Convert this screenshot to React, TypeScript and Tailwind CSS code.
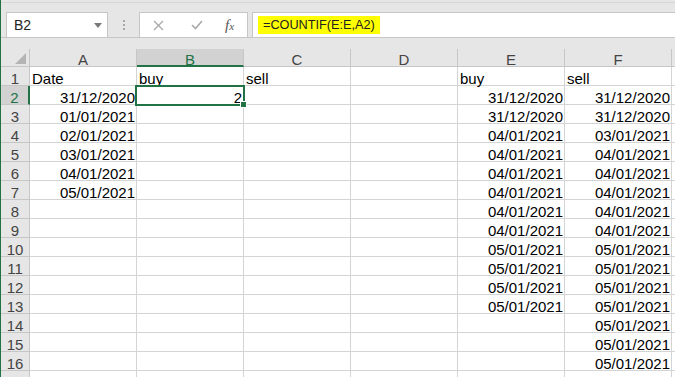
const cols = ["A", "B", "C", "D", "E", "F"];

type Cell = { v: string; right?: boolean };

const rows: Cell[][] = [
  [{ v: "Date" }, { v: "buy" }, { v: "sell" }, { v: "" }, { v: "buy" }, { v: "sell" }],
  [{ v: "31/12/2020", right: true }, { v: "2", right: true }, { v: "" }, { v: "" }, { v: "31/12/2020", right: true }, { v: "31/12/2020", right: true }],
  [{ v: "01/01/2021", right: true }, { v: "" }, { v: "" }, { v: "" }, { v: "31/12/2020", right: true }, { v: "31/12/2020", right: true }],
  [{ v: "02/01/2021", right: true }, { v: "" }, { v: "" }, { v: "" }, { v: "04/01/2021", right: true }, { v: "03/01/2021", right: true }],
  [{ v: "03/01/2021", right: true }, { v: "" }, { v: "" }, { v: "" }, { v: "04/01/2021", right: true }, { v: "04/01/2021", right: true }],
  [{ v: "04/01/2021", right: true }, { v: "" }, { v: "" }, { v: "" }, { v: "04/01/2021", right: true }, { v: "04/01/2021", right: true }],
  [{ v: "05/01/2021", right: true }, { v: "" }, { v: "" }, { v: "" }, { v: "04/01/2021", right: true }, { v: "04/01/2021", right: true }],
  [{ v: "" }, { v: "" }, { v: "" }, { v: "" }, { v: "04/01/2021", right: true }, { v: "04/01/2021", right: true }],
  [{ v: "" }, { v: "" }, { v: "" }, { v: "" }, { v: "04/01/2021", right: true }, { v: "04/01/2021", right: true }],
  [{ v: "" }, { v: "" }, { v: "" }, { v: "" }, { v: "05/01/2021", right: true }, { v: "05/01/2021", right: true }],
  [{ v: "" }, { v: "" }, { v: "" }, { v: "" }, { v: "05/01/2021", right: true }, { v: "05/01/2021", right: true }],
  [{ v: "" }, { v: "" }, { v: "" }, { v: "" }, { v: "05/01/2021", right: true }, { v: "05/01/2021", right: true }],
  [{ v: "" }, { v: "" }, { v: "" }, { v: "" }, { v: "05/01/2021", right: true }, { v: "05/01/2021", right: true }],
  [{ v: "" }, { v: "" }, { v: "" }, { v: "" }, { v: "" }, { v: "05/01/2021", right: true }],
  [{ v: "" }, { v: "" }, { v: "" }, { v: "" }, { v: "" }, { v: "05/01/2021", right: true }],
  [{ v: "" }, { v: "" }, { v: "" }, { v: "" }, { v: "" }, { v: "05/01/2021", right: true }],
  [{ v: "" }, { v: "" }, { v: "" }, { v: "" }, { v: "" }, { v: "" }],
];

const FormulaBar = () => (
  <div className="h-[49px] shrink-0 bg-[#e6e6e6] flex flex-col">
    <div className="h-[3px] border-b border-[#d6d6d6]" />
    <div className="mt-[9px] flex h-[26px] items-stretch border-b border-[#c6c6c6]">
      <div className="ml-[5px] flex w-[102px] items-center justify-between border border-b-0 border-[#c6c6c6] bg-white pl-[7px] pr-[5px]">
        <span className="text-[14px] text-[#222]">B2</span>
        <svg width="8" height="5" viewBox="0 0 8 5">
          <path d="M0 0h8L4 5z" fill="#7a7a7a" />
        </svg>
      </div>
      <div className="flex w-[31px] flex-col items-center justify-center gap-[2px]">
        <div className="h-[2px] w-[2px] bg-[#a8a8a8]" />
        <div className="h-[2px] w-[2px] bg-[#a8a8a8]" />
        <div className="h-[2px] w-[2px] bg-[#a8a8a8]" />
      </div>
      <div className="flex w-[109px] items-center border border-b-0 border-[#c6c6c6] bg-white">
        <svg className="ml-[13px]" width="11" height="11" viewBox="0 0 11 11">
          <path d="M1 1l9 9M10 1l-9 9" stroke="#a9a9a9" strokeWidth="1.3" />
        </svg>
        <svg className="ml-[27px]" width="12" height="10" viewBox="0 0 12 10">
          <path d="M1 5l3.5 3.5L11 1" stroke="#a9a9a9" strokeWidth="1.6" fill="none" />
        </svg>
        <span className="ml-[22px] font-['Liberation_Serif',serif] text-[15px] italic text-[#555]">
          f<span className="text-[11px]">x</span>
        </span>
      </div>
      <div className="ml-[4px] flex flex-1 items-center border-l border-t border-[#c6c6c6] bg-white pl-[5px]">
        <span className="bg-[#ffff00] px-[5px] py-[2px] text-[12.7px] leading-[14px] text-[#222]">=COUNTIF(E:E,A2)</span>
      </div>
    </div>
  </div>
);

export default function App() {
  return (
    <div className="h-[377px] w-[675px] overflow-hidden border-l border-[#217346] bg-white font-['Liberation_Sans',Arial,sans-serif]">
      <FormulaBar />
      <div className="relative">
        <div className="grid grid-cols-[29px_repeat(6,107px)_1fr]">
          <div className="relative h-[18px] border-b border-r border-[#c6c6c6] bg-[#e6e6e6]">
            <svg className="absolute bottom-[2px] right-[3px]" width="11" height="11" viewBox="0 0 11 11">
              <path d="M11 0v11H0z" fill="#b4b4b4" />
            </svg>
          </div>
          {cols.map((c) => (
            <div
              key={c}
              className={
                c === "B"
                  ? "h-[18px] border-b-2 border-r border-b-[#217346] border-r-[#c6c6c6] bg-[#d2d2d2] text-center text-[15px] leading-[21px] text-[#217346]"
                  : "h-[18px] border-b border-r border-[#c6c6c6] bg-[#e6e6e6] text-center text-[15px] leading-[21px] text-[#444]"
              }
            >
              {c}
            </div>
          ))}
          <div className="h-[18px] border-b border-[#c6c6c6] bg-[#e6e6e6]" />
          {rows.map((r, i) => (
            <div key={i} className="contents">
              <div
                className={
                  i === 1
                    ? "h-[19px] border-b border-r-2 border-b-[#c6c6c6] border-r-[#217346] bg-[#d2d2d2] text-center text-[15px] leading-[24px] text-[#217346]"
                    : "h-[19px] border-b border-r border-[#c6c6c6] bg-[#e6e6e6] text-center text-[15px] leading-[24px] text-[#444]"
                }
              >
                {i < 16 ? i + 1 : ""}
              </div>
              {r.map((cell, j) => (
                <div
                  key={j}
                  className={
                    cell.right
                      ? "h-[19px] overflow-hidden whitespace-nowrap border-b border-r border-[#d4d4d4] pr-[1px] text-right text-[15px] leading-[24px] text-black"
                      : "h-[19px] overflow-visible whitespace-nowrap border-b border-r border-[#d4d4d4] pl-[2px] text-[15px] leading-[24px] text-black"
                  }
                >
                  {cell.v}
                </div>
              ))}
              <div className="h-[19px] border-b border-[#d4d4d4]" />
            </div>
          ))}
        </div>
        <div className="pointer-events-none absolute left-[134px] top-[36px] h-[21px] w-[110px] border-2 border-[#217346]" />
        <div className="pointer-events-none absolute left-[239px] top-[52px] h-[7px] w-[7px] border border-white bg-[#217346]" />
      </div>
    </div>
  );
}
